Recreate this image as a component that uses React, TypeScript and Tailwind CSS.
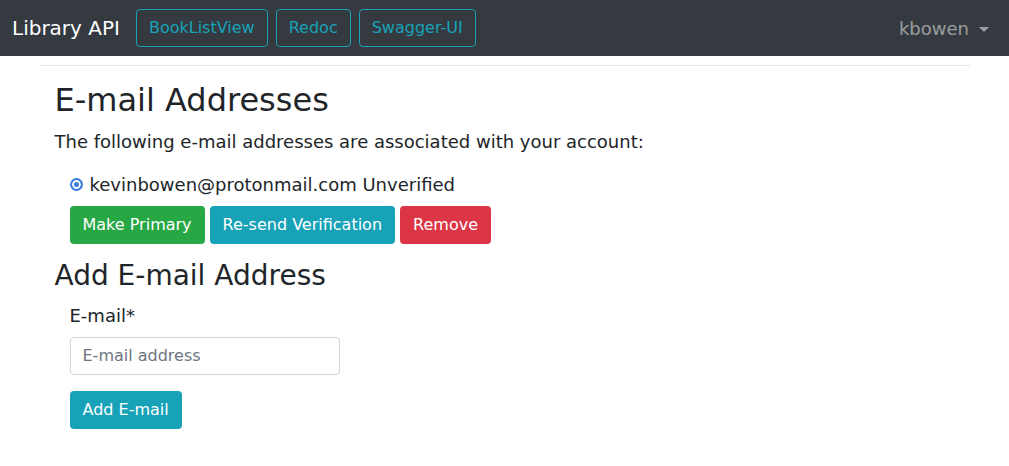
import React from 'react';

const FONT = { fontFamily: '"DejaVu Sans", "Liberation Sans", sans-serif' };

function NavButton({ children }: { children: React.ReactNode }) {
  return (
    <a className="inline-flex h-[38px] items-center rounded border border-[#17a2b8] px-3 text-base text-[#17a2b8]">
      {children}
    </a>
  );
}

function SolidButton({ color, children }: { color: string; children: React.ReactNode }) {
  return (
    <button className={`inline-flex h-[38px] items-center rounded px-[13px] text-base leading-6 text-white ${color}`}>
      {children}
    </button>
  );
}

export default function App() {
  return (
    <div className="min-h-[466px] bg-white text-[#212529]" style={FONT}>
      {/* navbar */}
      <nav className="flex h-14 items-center bg-[#343a40] pl-3 pr-[20px]">
        <span className="mr-4 text-xl text-white">Library API</span>
        <div className="flex gap-2">
          <NavButton>BookListView</NavButton>
          <NavButton>Redoc</NavButton>
          <NavButton>Swagger-UI</NavButton>
        </div>
        <div className="ml-auto flex items-center text-[18px] text-white/50">
          kbowen
          <span className="ml-[10px] mt-[2px] h-0 w-0 border-x-[5px] border-t-[5px] border-x-transparent border-t-white/50" />
        </div>
      </nav>

      <div className="mx-auto w-[930px] pt-[9px]">
        <div className="border-t border-black/10" />

        <div className="px-[15px] pt-[15px]">
          <h2 className="mb-[9px] text-[32px] leading-[1.2]">E-mail Addresses</h2>
          <p className="mb-4 text-[18px] leading-[27px]">
            The following e-mail addresses are associated with your account:
          </p>

          <div className="px-[15px]">
            <label className="flex items-center gap-[7px] text-[18px] leading-[27px]">
              <input
                type="radio"
                checked
                readOnly
                className="m-0 h-[13px] w-[13px] appearance-none rounded-full border-2 border-[#3b7ddd] bg-[#3b7ddd] shadow-[inset_0_0_0_2px_white]"
              />
              kevinbowen@protonmail.com Unverified
            </label>
            <div className="mt-2 flex gap-[5px]">
              <SolidButton color="bg-[#28a745]">Make Primary</SolidButton>
              <SolidButton color="bg-[#17a2b8]">Re-send Verification</SolidButton>
              <SolidButton color="bg-[#dc3545]">Remove</SolidButton>
            </div>
          </div>

          <h3 className="mb-[9px] mt-[15px] text-[28px] leading-[1.2]">Add E-mail Address</h3>

          <div className="px-[15px]">
            <label className="block text-[18px] leading-[27px]">E-mail*</label>
            <input
              type="email"
              placeholder="E-mail address"
              className="mt-2 block h-[38px] w-[270px] rounded border border-[#ced4da] px-3 text-base placeholder:text-[#6c757d]"
            />
            <div className="mt-4">
              <SolidButton color="bg-[#17a2b8]">Add E-mail</SolidButton>
            </div>
          </div>
        </div>
      </div>
    </div>
  );
}
